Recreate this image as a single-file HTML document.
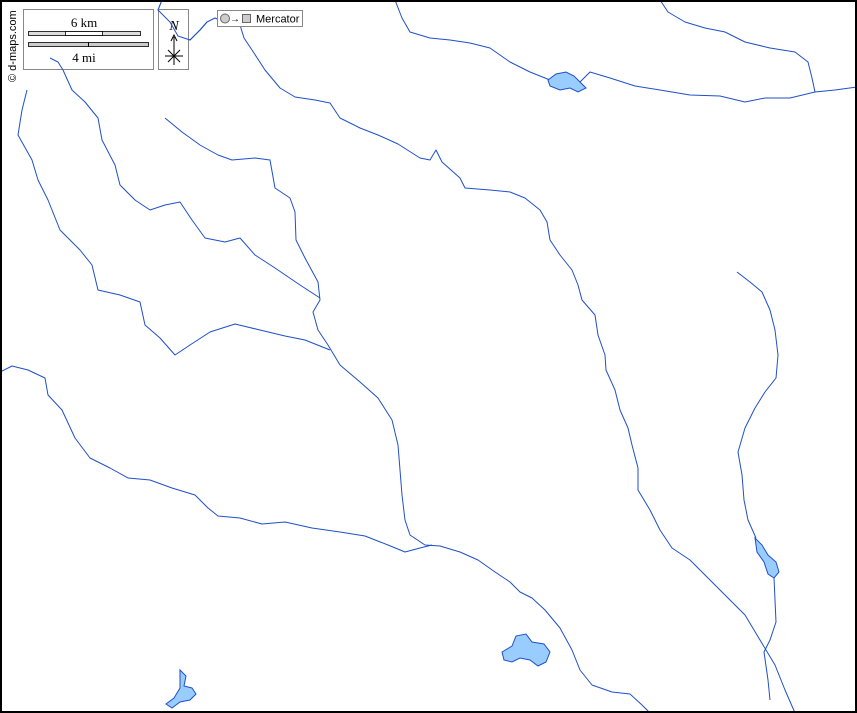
<!DOCTYPE html>
<html><head><meta charset="utf-8"><style>
html,body{margin:0;padding:0;background:#fff;}
svg{display:block;}
</style></head><body>
<svg width="857" height="713" viewBox="0 0 857 713" xmlns="http://www.w3.org/2000/svg">
<rect x="0" y="0" width="857" height="713" fill="#fff"/>
<g fill="none" stroke="#1f4fc8" stroke-width="1" stroke-linejoin="round">
<path d="M162,0 L158,10 L170,22 L178,36 L190,40 L200,30 L207,22 L215,18 L228,24 L240,25 L244,38 L252,50 L265,70 L280,88 L295,97 L315,100 L330,103 L340,118 L360,128 L378,135 L398,144 L420,158 L430,160 L436,150 L442,162 L460,178 L465,188 L490,190 L510,192 L525,198 L540,210 L547,222 L550,240 L560,255 L572,270 L578,285 L582,300 L595,315 L598,335 L605,355 L606,370 L615,390 L620,410 L628,428 L632,445 L638,468 L638,490 L650,510 L660,530 L672,548 L690,560 L705,575 L725,595 L745,615 L760,640 L775,665 L785,690 L795,713"/>
<path d="M395,0 L402,18 L410,32 L430,38 L450,40 L470,43 L490,48 L510,62 L530,72 L550,80 M580,82 L590,72 L610,78 L635,86 L660,90 L690,95 L720,96 L745,102 L765,98 L790,98 L815,92 L835,90 L857,87"/>
<path d="M660,0 L668,12 L685,22 L705,28 L725,32 L745,42 L770,48 L795,52 L808,62 L812,78 L815,92"/>
<path d="M63,70 L72,90 L85,102 L98,118 L102,140 L115,165 L120,185 L135,200 L150,210 L165,205 L180,202 L192,220 L205,238 L225,242 L240,238 L255,255 L275,268 L300,285 L320,298"/>
<path d="M27,90 L22,110 L18,135 L32,160 L38,180 L48,200 L60,230 L80,250 L92,265 L98,290 L120,295 L140,302 L145,325 L160,338 L175,355 L190,345 L210,332 L235,324 L260,330 L285,336 L305,340 L330,350"/>
<path d="M165,118 L182,132 L200,145 L218,155 L232,160 L255,158 L270,160 L275,188 L290,198 L295,212 L296,240 L305,258 L318,282 L320,300 L313,312 L318,330 L328,345 L340,365 L360,382 L378,398 L392,420 L398,445 L400,470 L402,495 L405,520 L410,535 L425,545 L440,546 L460,552 L478,560 L495,572 L510,582 L520,592 L532,598 L545,610 L560,628 L572,650 L580,670 L592,685 L612,692 L630,694 L642,705 L650,713"/>
<path d="M0,372 L12,366 L28,370 L45,378 L48,395 L62,410 L75,438 L90,458 L110,468 L128,478 L150,480 L172,488 L195,495 L208,508 L218,516 L240,518 L262,524 L285,522 L312,528 L340,532 L365,536 L388,545 L405,552 L420,548 L432,545"/>
<path d="M737,272 L750,282 L762,292 L770,310 L775,330 L778,355 L776,378 L765,392 L755,408 L745,428 L738,452 L742,475 L744,500 L748,520 L756,538 M774,578 L775,600 L776,622 L770,640 L764,652 L768,680 L770,700"/>
</g>
<g fill="#99ccff" stroke="#1f4fc8" stroke-width="1">
<path d="M548,80 L556,74 L566,72 L574,76 L580,82 L586,88 L578,92 L570,88 L560,90 L550,86 Z"/>
<path d="M755,538 L762,545 L768,555 L776,562 L779,572 L774,578 L768,574 L764,562 L757,552 Z"/>
<path d="M502,652 L512,646 L516,636 L526,634 L532,642 L544,644 L550,652 L546,662 L538,666 L530,660 L520,658 L512,662 L504,660 Z"/>
<path d="M180,670 L186,676 L184,686 L192,688 L196,694 L190,700 L180,702 L172,708 L166,704 L174,698 L180,688 Z"/>
</g>
<!-- scale box -->
<rect x="23.5" y="9.5" width="130" height="60" fill="#fff" stroke="#888"/>
<text x="84" y="27" font-family="Liberation Serif, serif" font-size="13" text-anchor="middle" fill="#000">6 km</text>
<rect x="28.5" y="31.5" width="112" height="4" fill="#ddd" stroke="#000" stroke-width="0.8"/>
<rect x="65.5" y="31.5" width="37" height="4" fill="#fff" stroke="#000" stroke-width="0.8"/>
<rect x="28.5" y="42.5" width="120" height="4" fill="#ccc" stroke="#000" stroke-width="0.8"/>
<line x1="88.5" y1="42" x2="88.5" y2="47" stroke="#000"/>
<text x="84" y="62" font-family="Liberation Serif, serif" font-size="13" text-anchor="middle" fill="#000">4 mi</text>
<path d="M50,58 L58,62 L63,70" fill="none" stroke="#1f4fc8"/>
<!-- north box -->
<rect x="158.5" y="9.5" width="30" height="60" fill="#fff" stroke="#888"/>
<text x="174" y="30" font-family="Liberation Serif, serif" font-size="14" font-style="italic" text-anchor="middle" fill="#000">N</text>
<line x1="174" y1="37" x2="174" y2="65" stroke="#000"/>
<path d="M171,41 L174,35 L177,41" fill="none" stroke="#000"/>
<line x1="165" y1="56" x2="183" y2="56" stroke="#000"/>
<line x1="168" y1="50" x2="180" y2="62" stroke="#000"/>
<line x1="180" y1="50" x2="168" y2="62" stroke="#000"/>
<path d="M162,0 L158,10 L170,22 L178,36 L190,40 L200,30 L207,22" fill="none" stroke="#1f4fc8"/>
<!-- mercator -->
<rect x="217.5" y="10.5" width="85" height="16" fill="#fff" stroke="#888"/>
<circle cx="225" cy="18.5" r="4.5" fill="#ccc" stroke="#666"/>
<text x="235" y="22" font-family="Liberation Sans, sans-serif" font-size="10" text-anchor="middle">→</text>
<rect x="242.5" y="14.5" width="8" height="8" fill="#ccc" stroke="#666"/>
<text x="256" y="22.5" font-family="Liberation Sans, sans-serif" font-size="11" fill="#000">Mercator</text>
<text transform="translate(16,82) rotate(-90)" font-family="Liberation Sans, sans-serif" font-size="11" fill="#000">© d-maps.com</text>
<rect x="1" y="1" width="855" height="711" fill="none" stroke="#000" stroke-width="2"/>
</svg>
</body></html>
